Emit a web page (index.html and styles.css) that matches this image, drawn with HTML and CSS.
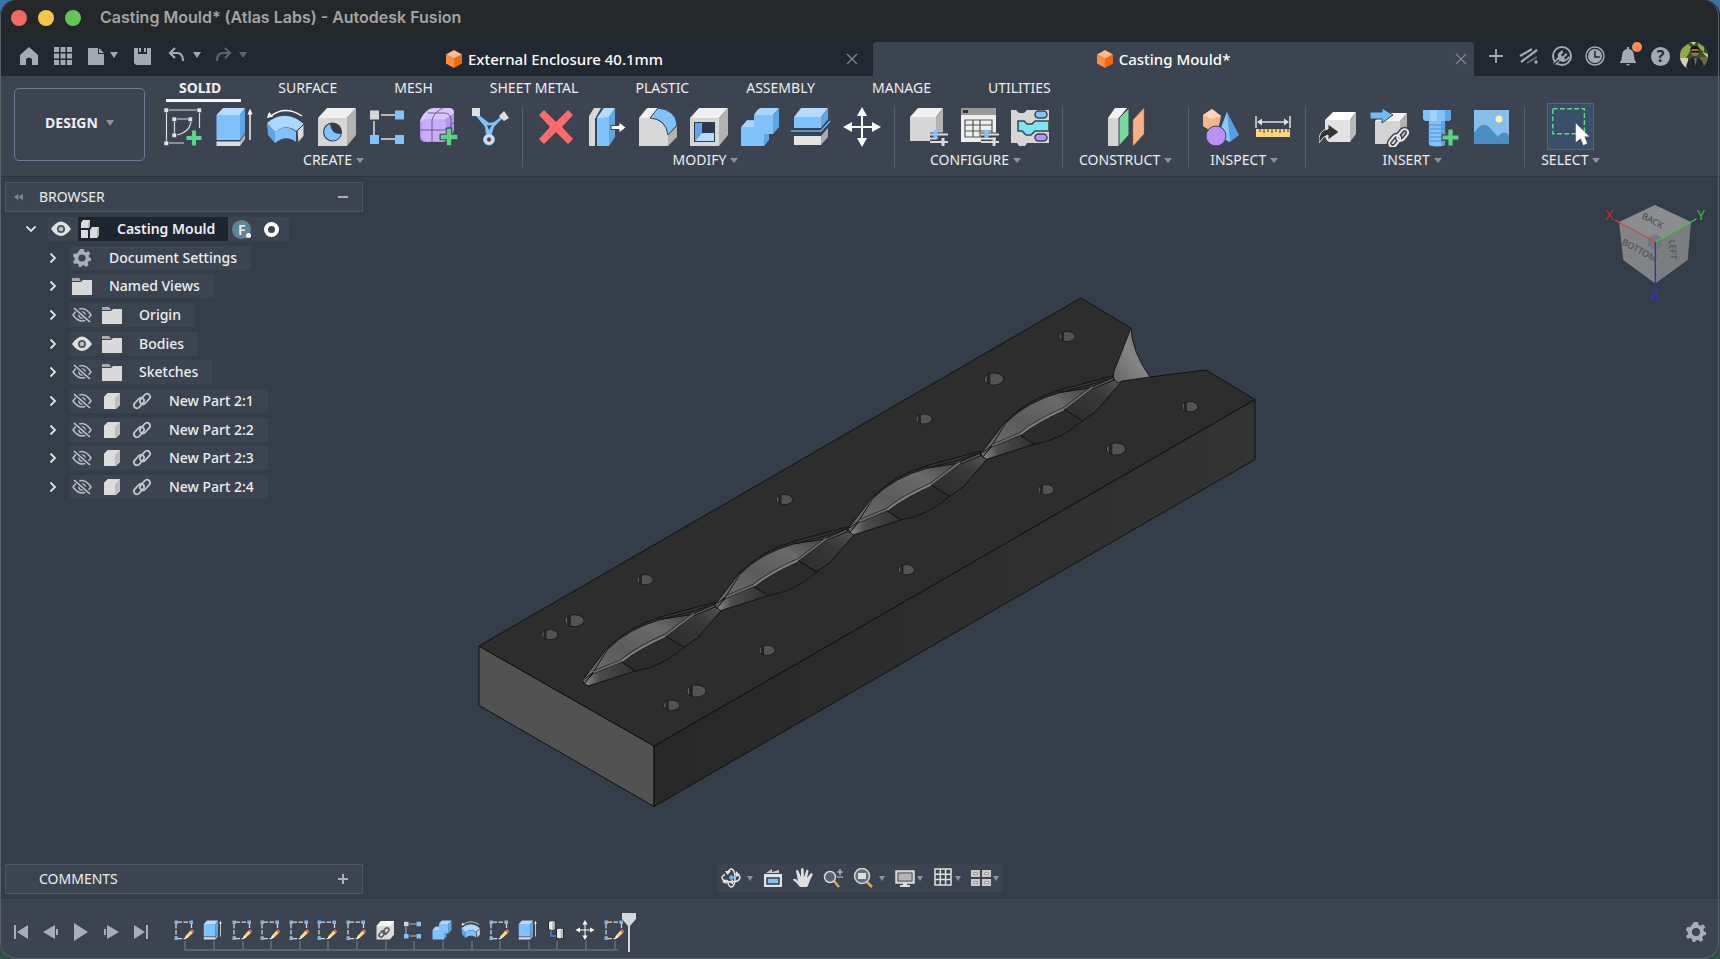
FILE: index.html
```html
<!DOCTYPE html>
<html lang="en">
<head>
<meta charset="utf-8">
<title>Casting Mould* (Atlas Labs) - Autodesk Fusion</title>
<link rel="stylesheet" href="styles.css">
</head>
<body>
<svg class="defs" aria-hidden="true">
  <defs>
    <linearGradient id="pocket" x1="0" y1="1" x2="1" y2="0"><stop offset="0" stop-color="#6c6c6c"/><stop offset=".35" stop-color="#5c5c5c"/><stop offset=".7" stop-color="#6a6a6a"/><stop offset="1" stop-color="#444"/></linearGradient>
    <linearGradient id="entry" x1="0" y1="0" x2="1" y2="0"><stop offset="0" stop-color="#8a8a8a"/><stop offset=".3" stop-color="#4c4c4c"/><stop offset="1" stop-color="#303030"/></linearGradient>
    <linearGradient id="exit" x1="0" y1="1" x2="1" y2="0"><stop offset="0" stop-color="#2b2b2b"/><stop offset=".6" stop-color="#383838"/><stop offset="1" stop-color="#555"/></linearGradient>
    <linearGradient id="notch" x1="0" y1="1" x2="1" y2="0"><stop offset="0" stop-color="#666"/><stop offset=".5" stop-color="#858585"/><stop offset="1" stop-color="#747474"/></linearGradient>
    <linearGradient id="side" x1="0" y1="0" x2="1" y2="0"><stop offset="0" stop-color="#282828"/><stop offset="1" stop-color="#333"/></linearGradient>
  </defs>
  <symbol id="i-plus-badge" viewBox="0 0 18 18"><path d="M6.500 1h5v5.500h5.500v5h-5.500v5.500h-5v-5.500H1v-5h5.500z" fill="#5bd486" stroke="#3c4452"/></symbol>
  <symbol id="i-sketch" viewBox="0 0 40 40">
    <path d="M4 3h30M2.500 5v29M35.500 5v16M4 36h16M11 12h14M10.500 13v14M27 13c0 8-6 13-14 15" fill="none" stroke="#d9dbdf" stroke-width="1.200"/>
    <path d="M0 1h4.500v4.500H0zM33 1h4.500v4.500H33zM0 34h4.500v4.500H0zM8 10h4.500v4.500H8zM24 10h4.500v4.500H24zM8 26h4.500v4.500H8z" fill="#e2e2e2" stroke="#3c4452" stroke-width=".6"/>
    <use href="#i-plus-badge" x="21" y="22" width="18" height="18"/>
  </symbol>
  <symbol id="i-extrude" viewBox="0 0 40 40">
    <path d="M1.500 8 8 1h22l-5 7z" fill="#b5dcff"/><path d="M1.500 8H25v25H1.500z" fill="#80c2fb"/><path d="m25 8 5-7v25l-5 7z" fill="#5fa6e2"/>
    <path d="M1.500 34.500H25V39H1.500z" fill="#dcdcdc"/><path d="m25 34.500 5-7V32l-5 7z" fill="#b8b8b8"/>
    <path d="M35 6v27" stroke="#fff" stroke-width="1.400"/><path d="m32.500 7.500 2.500-6 2.500 6z" fill="#fff"/>
  </symbol>
  <symbol id="i-revolve" viewBox="0 0 40 40">
    <path d="M1 16q18-15 37 1l-8 7q-10-8-21 1z" fill="#aad8ff"/><path d="m1 16 8 9v11l-7-8z" fill="#5fa6e2"/><path d="M9 25q11-9 21 0v10q-10-8-21 1z" fill="#80c2fb"/><path d="m31 24 7-7v12l-6 7z" fill="#dadada" stroke="#343c49"/>
    <path d="M5 9Q19-2 36 9" fill="none" stroke="#fff" stroke-width="1.300"/><path d="m1 11 2-6 4 4.500z" fill="#fff"/>
  </symbol>
  <symbol id="i-hole" viewBox="0 0 40 40">
    <path d="M1 11 10 1h29L30 11z" fill="#f0f0f0"/><path d="M1 11h29v28H1z" fill="#d6d6d6"/><path d="m30 11 9-10v27l-9 11z" fill="#b2b2b2"/>
    <circle cx="15.500" cy="25" r="9.500" fill="#343c49"/><path d="M13 17a8.500 8.500 0 1 0 11 10Q14 27 13 17z" fill="#80c2fb"/>
  </symbol>
  <symbol id="i-pattern" viewBox="0 0 40 40">
    <path d="M13 8h14M6 14v14M13 32h14" stroke="#dedede" stroke-width="1.500"/><path d="M2 3.500h9v9H2z" fill="#d6d6d6"/><path d="M27 3.500h9v9h-9zM2 28h9v9H2zM27 28h9v9h-9z" fill="#80c2fb"/>
  </symbol>
  <symbol id="i-form" viewBox="0 0 40 40">
    <path d="M1 15Q2 9 8 4q3-3 8-3h14q5 0 5 5v16q0 5-4 8-3 5-8 5H7q-6 0-6-6z" fill="#b696ee"/><path d="M1 15Q2 9 8 4q3-3 8-3h14q5 0 5 5L25 13H9Q3 13 1 15z" fill="#dcc6ff"/><path d="M3 15q0-3 4-3h15q5 0 5 5v12q0 5-5 5H8q-5 0-5-5z" fill="#c9adfb"/>
    <path d="M0 23h25q7-2 10-8M13 35V13q2-8 11-12M9 6h16q6 0 7 6v16" stroke="#6d5a9c" fill="none"/><use href="#i-plus-badge" x="20" y="20" width="20" height="20"/>
  </symbol>
  <symbol id="i-derive" viewBox="0 0 40 40">
    <path d="m6 7 12 10q7 1 14-7M6 7l10 12 2 12M32 10l-9 9-4 12M15 17h9l-5 9z" fill="none" stroke="#80c2fb" stroke-width="2.600"/>
    <path d="M2 1h8v8H2zM29 9l5-5 5 7-5 3z" fill="#e0e0e0"/><circle cx="19" cy="32.500" r="5.500" fill="#e0e0e0" stroke="#80c2fb"/><circle cx="19" cy="32.500" r="2" fill="#3c4452" stroke="#777"/>
  </symbol>
  <symbol id="i-delete" viewBox="0 0 40 40"><path d="m8 3 12 12L32 3l5 5-11 12 11 12-5 5-12-12L8 37l-5-5 11-12L3 8z" fill="#ff6a6a"/></symbol>
  <symbol id="i-press" viewBox="0 0 40 40">
    <path d="M2 9 7 1h7l-5 9v29H2z" fill="#d8d8d8"/><path d="m10 11 7-10h11l-6 9v29H10z" fill="#80c2fb"/><path d="m10 11 7-10h11l-6 9z" fill="#b5dcff"/><path d="m22 10 6-9v29l-6 9z" fill="#5fa6e2"/><path d="M9 11v28" stroke="#38404d" stroke-width="2"/>
    <path d="M24 18.500h8v-3.500l7 5.500-7 5.500v-3.500h-8z" fill="#fff" stroke="#3c4452"/>
  </symbol>
  <symbol id="i-fillet" viewBox="0 0 40 40">
    <path d="M1 11 9 1h11l-8 10z" fill="#f0f0f0"/><path d="M1 11h11q17 2 18 18v10H1z" fill="#d8d8d8"/><path d="m30 28 9-9v11l-9 9z" fill="#b2b2b2"/><path d="m12 11 8-10q18 2 19 17l-9 10Q28 12 12 11z" fill="#80c2fb" stroke="#3c4452"/>
  </symbol>
  <symbol id="i-shell" viewBox="0 0 40 40">
    <path d="M1 11 10 1h29L30 11z" fill="#f0f0f0"/><path d="M1 11h29v28H1z" fill="#d6d6d6"/><path d="m30 11 9-10v27l-9 11z" fill="#b2b2b2"/><path d="M5 15h21v20H5z" fill="#2c394c"/><path d="m6 16 7 0v10l-7 8z" fill="#5fa6e2"/><path d="m13 26 12 0V34H6z" fill="#b5dcff"/>
  </symbol>
  <symbol id="i-combine" viewBox="0 0 40 40">
    <path d="M14 8q4-7 7-7h18l-6 7z" fill="#a9d6ff"/><path d="m1 21 6-8h7V8h19v19h-9v12H1z" fill="#80c2fb"/><path d="m1 20 6-6h7v6z" fill="#a9d6ff"/><path d="m33 8 6-7v19l-6 7zM24 27h5v6l-5 6z" fill="#5fa6e2"/>
  </symbol>
  <symbol id="i-split" viewBox="0 0 40 40">
    <path d="m3 10 7-9h27l-7 9z" fill="#b5dcff"/><path d="M3 10h27v11H3z" fill="#80c2fb"/><path d="m30 10 7-9v11l-7 9z" fill="#5fa6e2"/><path d="M3 29h27v9H3z" fill="#e4e4e4"/><path d="m30 29 7-8v9l-7 8z" fill="#aaa"/><path d="M0 24h30l9-10" stroke="#2a4254" stroke-width="4" fill="none"/><path d="M0 24h30l9-10" stroke="#6db5ee" stroke-width="1.500" fill="none"/>
  </symbol>
  <symbol id="i-move" viewBox="0 0 40 40"><path d="m20 0 5 9h-4v10h9v-4l9 5-9 5v-4h-9v10h4l-5 9-5-9h4V21h-9v4l-9-5 9-5v4h9V9h-4z" fill="#fff"/></symbol>
  <symbol id="i-sliders" viewBox="0 0 18 18"><path d="M0 6h18M0 13h18" stroke="#3c4452" stroke-width="5"/><path d="M0 5.500h18M0 13h18" stroke="#dcdcdc" stroke-width="2"/><path d="M5.500 1v8" stroke="#80c2fb" stroke-width="4"/><path d="M13 9v8" stroke="#dcdcdc" stroke-width="3"/></symbol>
  <symbol id="i-confpart" viewBox="0 0 40 40"><path d="m2 10 8-9h25l-7 9z" fill="#f0f0f0"/><path d="M2 10h26v24H2z" fill="#d6d6d6"/><path d="m28 10 7-9v24l-7 9z" fill="#b2b2b2"/><use href="#i-sliders" x="22" y="22" width="18" height="18"/></symbol>
  <symbol id="i-conftable" viewBox="0 0 40 40"><path d="M2 1h35v7H2z" fill="#999"/><path d="M4 3h5v3H4z" fill="#333"/><path d="M2 8h35v27H2z" fill="#eee"/><path d="M6 13h27v17H6zM6 18h27M6 24h27M14 13v17M21 13v17" fill="none" stroke="#555" stroke-width="1.200"/><use href="#i-sliders" x="22" y="22" width="18" height="18"/></symbol>
  <symbol id="i-rules" viewBox="0 0 40 40"><path d="M1 3h5l3 3h5l3-3h22v33H17l-2 3H9l-2-3H1z" fill="#d6d6d6"/><path d="M8 14h6l3 3h5l3-3h14v10H25l-4 4h-5l-4-4H8z" fill="#7be6f2" stroke="#3c4452" stroke-width="1.500"/><rect x="25" y="4" width="12" height="7" rx="3.500" fill="#80c2fb" stroke="#3c4452" stroke-width="1.500"/><rect x="25" y="27" width="12" height="7" rx="3.500" fill="#b794f4" stroke="#3c4452" stroke-width="1.500"/></symbol>
  <symbol id="i-construct" viewBox="0 0 40 40"><path d="M2 11 9 1h12l-8 10v28H2z" fill="#f2f2f2"/><path d="M2 11h11v28H2z" fill="#d4d4d4"/><path d="m13 11 10-10v27L13 39z" fill="#77d99c" stroke="#38404d"/><path d="M27 13 38 1v26L27 39z" fill="#f7b184" stroke="#b5694b" stroke-width=".5"/></symbol>
  <symbol id="i-measureshapes" viewBox="0 0 40 40"><path d="m1 8 9-6 9 7-2 10-10 4-6-4z" fill="#f6b48c"/><path d="m1 8 9-6 9 7-10 3z" fill="#ffd3b8"/><path d="m25 5 12 23-9 7-12-6z" fill="#559fdc"/><path d="m25 5-9 24 12 6z" fill="#8bc8fa"/><circle cx="14" cy="29" r="10" fill="#bb90f5" stroke="#3c4452"/></symbol>
  <symbol id="i-measure" viewBox="0 0 40 40"><path d="M3 9v12M37 9v12M5 15h30" stroke="#e0e0e0" stroke-width="1.500"/><path d="m4 15 5-3.500v7zM36 15l-5-3.500v7z" fill="#e0e0e0"/><path d="M3 22h34v8H3z" fill="#ffd57d"/><path d="M7 22v3M11 22v4M15 22v3M19 22v4M23 22v3M27 22v4M31 22v3M35 22v3" stroke="#59513c" stroke-width="1.200"/></symbol>
  <symbol id="i-insderive" viewBox="0 0 40 40"><path d="m6 13 8-8h23l-6 8z" fill="#fff"/><path d="M6 13h25v22H10q-4-2-4-8z" fill="#e2e2e2"/><path d="m31 13 6-8v22l-6 8z" fill="#b8b8b8"/><path d="M0 36q-1-13 9-14v-5l11 8-11 8v-5q-5 1-9 8z" fill="#343434" stroke="#dedede"/></symbol>
  <symbol id="i-inscomp" viewBox="0 0 40 40"><path d="m5 14 8-8h24l-7 8z" fill="#f4f4f4"/><path d="M5 14h25v23H5z" fill="#d4d4d4"/><path d="m30 14 7-8v22l-7 9z" fill="#b3b3b3"/><path d="M0 5h12V1l11 7-11 8v-4H0z" fill="#70baf8" stroke="#3c4452"/><g fill="none" stroke="#3c4452" stroke-width="5"><rect x="18" y="31" width="13" height="7" rx="3.500" transform="rotate(-50 24 34)"/><rect x="26" y="25" width="13" height="7" rx="3.500" transform="rotate(-50 32 28)"/></g><g fill="none" stroke="#ececec" stroke-width="2"><rect x="18" y="31" width="13" height="7" rx="3.500" transform="rotate(-50 24 34)"/><rect x="26" y="25" width="13" height="7" rx="3.500" transform="rotate(-50 32 28)"/></g></symbol>
  <symbol id="i-bolt" viewBox="0 0 40 40"><path d="M2 3h28v9l-2 2H4l-2-2z" fill="#80c2fb"/><path d="M9 3h7v11H9z" fill="#9ed3ff"/><path d="M24 3h6v9l-2 2h-4z" fill="#5fa6e2"/><path d="M8 14h16v24q-8 3-16 0z" fill="#80c2fb"/><path d="M20 14h4v24h-4z" fill="#5fa6e2"/><path d="M7 18h18M7 22h18M7 26h18M7 30h18M7 34h18" stroke="#4e93cf" stroke-width="1"/><use href="#i-plus-badge" x="20" y="21" width="19" height="19"/></symbol>
  <symbol id="i-image" viewBox="0 0 40 40"><path d="M2 3h35v34H2z" fill="#87bde8"/><path d="M2 26q9-14 17-4l7 8q5-8 11-2v9H2z" fill="#4b8fc2"/><circle cx="27" cy="12" r="3.500" fill="#fff1b0"/></symbol>
  <symbol id="i-select" viewBox="0 0 47 47"><path d="M5 5h33v26H5z" fill="none" stroke="#5fd98c" stroke-width="1.500" stroke-dasharray="5 2.500"/><path d="M29 20v20l5-4 3 7 4-2-3-7h5z" fill="#fff"/></symbol>
  <symbol id="i-sketchedit" viewBox="0 0 40 40"><path d="M7 4h25M4 8v26M35 8v8M7 37h15" stroke="#d8d8d8" stroke-width="2.500" stroke-dasharray="9 3"/><path d="M1 1h7v7H1zM31 1h7v7h-7zM1 33h7v7H1z" fill="#72b9f4"/><path d="m24 31 9-10 5 5-10 9-6 3z" fill="#ffd483"/><path d="m33 21 3-3 5 5-3 3z" fill="#f0605c"/><path d="m24 31 4 4-7 4z" fill="#fff"/></symbol>
  <symbol id="i-cylinders" viewBox="0 0 40 40"><path d="M10 22v10h10" fill="none" stroke="#4c86d0" stroke-width="3"/><path d="M5 3q7-4 13 0v16q-7 4-13 0zM21 18q7-4 14 0v18q-7 4-14 0z" fill="#eaeaea" stroke="#222933" stroke-width="2"/><path d="M12 3h5v16h-5zM29 19h5v17h-5z" fill="#bdbdbd"/></symbol>
  <symbol id="i-partlink" viewBox="0 0 40 40"><path d="m3 12 9-10h26v27l-8 10H3z" fill="#dadada"/><path d="m3 12 9-10h26l-7 10z" fill="#f7f7f7"/><g fill="none" stroke="#555" stroke-width="3"><rect x="7" y="24" width="14" height="8" rx="4" transform="rotate(-50 14 28)"/><rect x="15" y="18" width="14" height="8" rx="4" transform="rotate(-50 22 22)"/></g></symbol>
  <symbol id="i-home" viewBox="0 0 18 18"><path d="m9 0 9 8v10h-6v-6q-3-3-6 0v6H0V8z"/></symbol>
  <symbol id="i-apps" viewBox="0 0 18 18"><path d="M0 0h5v5H0zM6.500 0h5v5h-5zM13 0h5v5h-5zM0 6.500h5v5H0zM6.500 6.500h5v5h-5zM13 6.500h5v5h-5zM0 13h5v5H0zM6.500 13h5v5h-5zM13 13h5v5h-5z"/></symbol>
  <symbol id="i-file" viewBox="0 0 18 18"><path d="M0 1h10v6h6v11H0zM11 1l5 5h-5z"/></symbol>
  <symbol id="i-save" viewBox="0 0 18 18"><path d="M0 1h4v6h9V1h4v17H4v-6h9v5h-2v-3H9v4H2l-2-2zM5 1h2v4H5zM10 1h2v4h-2z"/></symbol>
  <symbol id="i-undo" viewBox="0 0 18 18"><path d="M7 1 2 6l5 5M2 6h7q6 0 6 8" fill="none" stroke="currentColor" stroke-width="2.200"/></symbol>
  <symbol id="i-cube3" viewBox="0 0 18 20"><path d="m9 0 9 5-9 5-9-5z" fill="#ffb98a"/><path d="m0 5 9 5v10l-9-5z" fill="#ff8c3f"/><path d="m18 5-9 5v10l9-5z" fill="#f46a0a"/></symbol>
  <symbol id="i-eye" viewBox="0 0 20 16"><path d="M0 8q10-15 20 0-10 14-20 0z" fill="#e0e0e0"/><circle cx="10" cy="8" r="4" fill="#4a5260"/><circle cx="10" cy="8" r="2.300" fill="#bbb"/></symbol>
  <symbol id="i-eyeoff" viewBox="0 0 20 16"><path d="M1 8q9-13 18 0-9 12-18 0z" fill="none" stroke="#b9bcc3" stroke-width="1.500"/><circle cx="10" cy="8" r="3" fill="none" stroke="#b9bcc3" stroke-width="1.500"/><path d="m3 1 15 14" stroke="#3c4452" stroke-width="4"/><path d="m2 1 16 14" stroke="#c9ccd1" stroke-width="1.500"/></symbol>
  <symbol id="i-folder" viewBox="0 0 20 18"><path d="M0 1h7l2 3H0z" fill="#aaa"/><path d="M0 5h9l2-2h9v15H0z" fill="#d9d9d9"/></symbol>
  <symbol id="i-part" viewBox="0 0 18 18"><path d="m1 5 4-4h12l-4 4z" fill="#f0f0f0"/><path d="m1 5 4-4h12v12l-4 4H1z" fill="#dcdcdc"/><path d="m12 6 5-5v11l-5 5z" fill="#bdbdbd"/></symbol>
  <symbol id="i-assembly" viewBox="0 0 20 18"><path d="m1 3 2-3h7v6L9 8H1zM1 10h7v8H1zM10 10l2-3h7v8l-2 3h-7z" fill="#dcdcdc"/><path d="m8 3 2-3v6L8 8zM17 10l2-3v8l-2 3z" fill="#b2b2b2"/></symbol>
  <symbol id="i-link" viewBox="0 0 20 18"><g fill="none" stroke="#c6c8cc" stroke-width="1.800"><rect x="1" y="8" width="12" height="6" rx="3" transform="rotate(-48 7 11)"/><rect x="7" y="4" width="12" height="6" rx="3" transform="rotate(-48 13 7)"/></g></symbol>
  <symbol id="i-gear" viewBox="0 0 20 20"><path fill-rule="evenodd" d="M8 0h4l.6 3 2 .8L17 2.200 19.300 5l-2 2.500.6 2 2.100.5v3l-2.700.5-1 2 1 2.500-3 2-2-2-2 .3L9 20H6.500L6 17l-2-1-2.500.8L0 14l2-2-.5-2.500L0 8l1-3 3 .3L5.500 3.500zM10 6a4 4 0 1 0 0 8 4 4 0 0 0 0-8z" fill="#a9adb7"/></symbol>
  <symbol id="i-chevron" viewBox="0 0 8 12"><path d="m1.500 1.500 4.500 4.500-4.500 4.500" fill="none" stroke="#e2e2dc" stroke-width="1.800"/></symbol>
</svg>

<div class="window">
  <header class="titlebar">
    <button class="light light-close" aria-label="Close"></button>
    <button class="light light-min" aria-label="Minimize"></button>
    <button class="light light-max" aria-label="Zoom"></button>
    <h1 class="title">Casting Mould* (Atlas Labs) - Autodesk Fusion</h1>
  </header>

  <div class="docbar">
    <div class="quick">
      <button aria-label="Home"><svg class="s18"><use href="#i-home"/></svg></button>
      <button aria-label="Data panel"><svg class="s18"><use href="#i-apps"/></svg></button>
      <button class="pair" aria-label="File"><svg class="s18"><use href="#i-file"/></svg><i class="caret"></i></button>
      <button aria-label="Save"><svg class="s18"><use href="#i-save"/></svg></button>
      <button class="pair wide" aria-label="Undo"><svg class="s18"><use href="#i-undo"/></svg><i class="caret"></i></button>
      <button class="pair wide dim" aria-label="Redo"><svg class="s18 flip"><use href="#i-undo"/></svg><i class="caret"></i></button>
    </div>
    <div class="doctabs">
      <div class="doctab">
        <button class="docname"><svg class="doccube"><use href="#i-cube3"/></svg>External Enclosure 40.1mm</button>
        <button class="docclose" aria-label="Close External Enclosure"><svg viewBox="0 0 14 14"><path d="m2 2 10 10M12 2 2 12"/></svg></button>
      </div>
      <div class="doctab active">
        <button class="docname"><svg class="doccube"><use href="#i-cube3"/></svg>Casting Mould*</button>
        <button class="docclose" aria-label="Close Casting Mould"><svg viewBox="0 0 14 14"><path d="m2 2 10 10M12 2 2 12"/></svg></button>
      </div>
    </div>
    <div class="account">
      <button aria-label="New tab"><svg viewBox="0 0 20 20"><path d="M10 3v14M3 10h14" stroke="currentColor" stroke-width="1.800"/></svg></button>
      <button aria-label="Activity"><svg viewBox="0 0 20 20"><path d="M1 10 13 3M2 16 18 4" stroke="currentColor" stroke-width="2.200"/><path d="m8 17 10-6" stroke="#686d78" stroke-width="2"/><circle cx="17" cy="16" r="1.700" fill="currentColor"/></svg></button>
      <button aria-label="Extensions"><svg viewBox="0 0 20 20"><circle cx="10" cy="10" r="9" fill="none" stroke="currentColor" stroke-width="2"/><path d="m1 17 5-6q-1-4 2-5l2-2 1.500 2L9 9l1.500 1.500L14 7l1.500 1.500L12 12l1.500 1.500L17 10l1 2-4 3q-3 2-6 0l-4 4z" fill="currentColor"/><path d="m2 18 5-4" stroke="#222831" stroke-width="1.500"/></svg></button>
      <button aria-label="Job status"><svg viewBox="0 0 20 20"><circle cx="10" cy="10" r="9" fill="none" stroke="currentColor" stroke-width="1.500"/><circle cx="10" cy="10" r="7" fill="currentColor"/><path d="M10 5v6h5" fill="none" stroke="#222831" stroke-width="1.600"/></svg></button>
      <button class="bell" aria-label="Notifications"><svg viewBox="0 0 20 20"><path d="M9 1h2v2q5 1 5 7 0 4 2 6v1H2v-1q2-2 2-6 0-6 5-7zM8 18h4q-2 3-4 0z" fill="currentColor"/></svg><i class="dot"></i></button>
      <button class="help" aria-label="Help">?</button>
      <button class="avatar" aria-label="Profile"><svg viewBox="0 0 28 28"><path d="M0 0h28v28H0z" fill="#3c5224"/><path d="M0 8 8 2l4 4-6 10H0zM18 1l6 4v5l-6-4z" fill="#93a94c"/><path d="M10 0h6l-2 3zM22 10l6 2v4z" fill="#c9d39a"/><path d="M0 16h8v12H0z" fill="#d3cfbc"/><path d="M20 15h8v13h-8z" fill="#6a6d46"/><path d="M6 28q0-12 9-13 9 1 9 13z" fill="#23262b"/><circle cx="15" cy="10" r="4" fill="#9a6f52"/><path d="M10 9q0-5 5-5t5 5l-2-2h-6zM11 9h8v1.500h-8z" fill="#15110f"/><path d="m14 16 1.500 8 1.500-8z" fill="#60748a"/></svg></button>
    </div>
  </div>

  <div class="ribbon">
    <div class="workspace"><button class="design">DESIGN <i class="caret"></i></button></div>
    <div class="ribbonbody">
      <nav class="ribtabs">
        <button class="ribtab on">SOLID</button><button class="ribtab">SURFACE</button><button class="ribtab">MESH</button><button class="ribtab">SHEET METAL</button><button class="ribtab">PLASTIC</button><button class="ribtab">ASSEMBLY</button><button class="ribtab">MANAGE</button><button class="ribtab">UTILITIES</button>
      </nav>
      <div class="groups">
        <section class="group first">
          <div class="tools">
            <button class="tool" aria-label="Create Sketch"><svg><use href="#i-sketch"/></svg></button>
            <button class="tool" aria-label="Extrude"><svg><use href="#i-extrude"/></svg></button>
            <button class="tool" aria-label="Revolve"><svg><use href="#i-revolve"/></svg></button>
            <button class="tool" aria-label="Hole"><svg><use href="#i-hole"/></svg></button>
            <button class="tool" aria-label="Rectangular Pattern"><svg><use href="#i-pattern"/></svg></button>
            <button class="tool" aria-label="Create Form"><svg><use href="#i-form"/></svg></button>
            <button class="tool" aria-label="Automated Modeling"><svg><use href="#i-derive"/></svg></button>
          </div>
          <button class="grouplabel">CREATE<i class="caret"></i></button>
        </section>
        <section class="group">
          <div class="tools">
            <button class="tool" aria-label="Delete"><svg><use href="#i-delete"/></svg></button>
            <button class="tool" aria-label="Press Pull"><svg><use href="#i-press"/></svg></button>
            <button class="tool" aria-label="Fillet"><svg><use href="#i-fillet"/></svg></button>
            <button class="tool" aria-label="Shell"><svg><use href="#i-shell"/></svg></button>
            <button class="tool" aria-label="Combine"><svg><use href="#i-combine"/></svg></button>
            <button class="tool" aria-label="Split Body"><svg><use href="#i-split"/></svg></button>
            <button class="tool" aria-label="Move"><svg><use href="#i-move"/></svg></button>
          </div>
          <button class="grouplabel">MODIFY<i class="caret"></i></button>
        </section>
        <section class="group">
          <div class="tools">
            <button class="tool" aria-label="Configure"><svg><use href="#i-confpart"/></svg></button>
            <button class="tool" aria-label="Configuration Table"><svg><use href="#i-conftable"/></svg></button>
            <button class="tool" aria-label="Rules"><svg><use href="#i-rules"/></svg></button>
          </div>
          <button class="grouplabel">CONFIGURE<i class="caret"></i></button>
        </section>
        <section class="group roomy">
          <div class="tools"><button class="tool" aria-label="Offset Plane"><svg><use href="#i-construct"/></svg></button></div>
          <button class="grouplabel">CONSTRUCT<i class="caret"></i></button>
        </section>
        <section class="group">
          <div class="tools">
            <button class="tool" aria-label="Physical Material"><svg><use href="#i-measureshapes"/></svg></button>
            <button class="tool" aria-label="Measure"><svg><use href="#i-measure"/></svg></button>
          </div>
          <button class="grouplabel">INSPECT<i class="caret"></i></button>
        </section>
        <section class="group">
          <div class="tools">
            <button class="tool" aria-label="Insert Derive"><svg><use href="#i-insderive"/></svg></button>
            <button class="tool" aria-label="Insert Component"><svg><use href="#i-inscomp"/></svg></button>
            <button class="tool" aria-label="Insert Fastener"><svg><use href="#i-bolt"/></svg></button>
            <button class="tool" aria-label="Insert Canvas"><svg><use href="#i-image"/></svg></button>
          </div>
          <button class="grouplabel">INSERT<i class="caret"></i></button>
        </section>
        <section class="group roomy">
          <div class="tools"><button class="tool selected" aria-label="Select"><svg><use href="#i-select"/></svg></button></div>
          <button class="grouplabel">SELECT<i class="caret"></i></button>
        </section>
      </div>
    </div>
  </div>

  <main class="viewport">
    <svg class="model" viewBox="0 177 1720 722" role="img" aria-label="Casting mould body">
      <defs>
        <g id="hole"><ellipse rx="8" ry="5" fill="#262626" stroke="#191919" stroke-width=".8"/><path d="M-3-4.300Q-1-4.600 0-4.600A7.600 4.600 0 0 1 0 4.600q-2 0-3-.3z" fill="#535353"/><path d="M-6-3.200Q-9 0-6 3.200-7 0-6-3.200z" fill="#777"/></g>
        <g id="cavity" stroke="#161616" stroke-width="3" stroke-linejoin="round">
          <path d="M0-5 73-100Q140-168 237-195L397-238 422-220 387-180 347-133 305-103Q240-45 159-32L17 13z" fill="#2c2c2c"/>
          <path d="M249-137 337-203 397-225 422-220 387-180 347-133 305-103z" fill="url(#exit)"/>
          <path d="M32-25 117-60 159-32 17 13 5 5z" fill="url(#entry)"/>
          <path d="M0-5 73-100 78-95 32-28 5 7z" fill="#656565"/>
          <path d="M32-28 75-97Q137-160 239-188L332-203 249-137Q167-100 117-62z" fill="url(#pocket)"/>
          <path d="m237-195 160-43v13l-60 22-98 15z" fill="#353535"/>
          <path d="M330-203 397-233V-224L340-200z" fill="#555"/>
          <path d="M33-28 117-63Q167-103 249-139L335-204" fill="none" stroke="#222" stroke-width="10"/>
          <path d="M33-28 117-63Q167-103 249-139L335-204" fill="none" stroke="#6a6a6a" stroke-width="6"/>
          <path d="M117-61Q167-101 249-137" fill="none" stroke="#868686" stroke-width="4"/>
          <path d="M117-60 159-32M249-137 305-103M6-8 32-28M239-188l90-23 68-22" fill="none"/>
        </g>
      </defs>
      <path d="M479 646 654 746v60.500L479 705.500z" fill="#525252" stroke="#111"/>
      <path d="M654 746 1255 399.500v60L654 806.500z" fill="url(#side)" stroke="#111"/>
      <path d="M479 646 1081 298 1131 328 1113 376 1116 382 1150 377 1206 370 1255 399.500 654 746z" fill="#2d2d2d" stroke="#111"/>
      <use href="#cavity" transform="translate(582.500 681.700) scale(.3333)"/>
      <use href="#cavity" transform="translate(715 606.300) scale(.3333)"/>
      <use href="#cavity" transform="translate(848 530.600) scale(.3333)"/>
      <use href="#cavity" transform="translate(981 455) scale(.3333)"/>
      <path d="M1131 328Q1132 352 1150 377L1122 381Q1117 385 1114 379 1112 375 1116 366z" fill="url(#notch)" stroke="#1b1b1b"/>
      <use href="#hole" x="1067" y="336.500"/><use href="#hole" x="924" y="419"/><use href="#hole" x="784.500" y="499.500"/><use href="#hole" x="645" y="579.700"/><use href="#hole" x="549.700" y="634.700"/>
      <use href="#hole" x="1190" y="406.700"/><use href="#hole" x="1046" y="489.700"/><use href="#hole" x="906.500" y="569.700"/><use href="#hole" x="767" y="650.300"/><use href="#hole" x="671.700" y="705.300"/>
      <use href="#hole" transform="translate(994 379) scale(1.200)"/><use href="#hole" transform="translate(1116 449) scale(1.200)"/><use href="#hole" transform="translate(574.500 620.700) scale(1.200)"/><use href="#hole" transform="translate(696.500 691) scale(1.200)"/>
    </svg>

    <svg class="viewcube" viewBox="0 0 110 110" role="img" aria-label="View cube">
      <path d="M57 8 93 25 57.300 45 21 25z" fill="#8b8d90"/><path d="m21 25 36.300 20v41.500L25.300 63z" fill="#828487"/><path d="M93 25 57.300 45v41.500L89.700 63z" fill="#7b7d81"/>
      <path d="m50 41 7-4 7 4v8l-7 4-7-4z" fill="#6b6e76" opacity=".6"/>
      <path d="m17 23 40.300 22" stroke="#d2474b" stroke-width="1.300"/><path d="m57.300 45 41-23" stroke="#43c84a" stroke-width="1.300"/><path d="M57.300 45v45" stroke="#2d2fc0" stroke-width="1.300"/>
      <text x="7" y="23" fill="#b32a35">X</text><text x="99" y="23" fill="#37a83d">Y</text><text x="53" y="102" fill="#3234c8">Z</text>
      <g class="faces"><text transform="translate(43 21) rotate(28)">BACK</text><text transform="translate(23 47) rotate(28)">BOTTOM</text><text transform="translate(71 43) rotate(86)">LEFT</text></g>
    </svg>

    <aside class="browser">
      <header class="panelhead">
        <button class="collapse" aria-label="Collapse browser"><svg viewBox="0 0 10 8"><path d="m5 0v8L0 4zM10 0v8L5 4z"/></svg></button>
        <h2>BROWSER</h2>
        <button class="panelbtn" aria-label="Minimize browser"><svg viewBox="0 0 10 10"><path d="M0 5h10"/></svg></button>
      </header>
      <ul class="tree">
        <li class="root"><button class="twist open" aria-label="Collapse"><svg><use href="#i-chevron"/></svg></button>
          <span class="chip"><svg class="ico eye"><use href="#i-eye"/></svg><span class="rootname"><svg class="ico"><use href="#i-assembly"/></svg><b>Casting Mould</b></span><span class="badge">F</span><span class="ring"></span></span></li>
        <li><button class="twist" aria-label="Expand"><svg><use href="#i-chevron"/></svg></button><span class="chip"><svg class="ico"><use href="#i-gear"/></svg><span class="name">Document Settings</span></span></li>
        <li><button class="twist" aria-label="Expand"><svg><use href="#i-chevron"/></svg></button><span class="chip"><svg class="ico"><use href="#i-folder"/></svg><span class="name">Named Views</span></span></li>
        <li><button class="twist" aria-label="Expand"><svg><use href="#i-chevron"/></svg></button><span class="chip"><svg class="ico"><use href="#i-eyeoff"/></svg><svg class="ico"><use href="#i-folder"/></svg><span class="name">Origin</span></span></li>
        <li><button class="twist" aria-label="Expand"><svg><use href="#i-chevron"/></svg></button><span class="chip"><svg class="ico"><use href="#i-eye"/></svg><svg class="ico"><use href="#i-folder"/></svg><span class="name">Bodies</span></span></li>
        <li><button class="twist" aria-label="Expand"><svg><use href="#i-chevron"/></svg></button><span class="chip"><svg class="ico"><use href="#i-eyeoff"/></svg><svg class="ico"><use href="#i-folder"/></svg><span class="name">Sketches</span></span></li>
        <li><button class="twist" aria-label="Expand"><svg><use href="#i-chevron"/></svg></button><span class="chip"><svg class="ico"><use href="#i-eyeoff"/></svg><svg class="ico"><use href="#i-part"/></svg><svg class="ico"><use href="#i-link"/></svg><span class="name">New Part 2:1</span></span></li>
        <li><button class="twist" aria-label="Expand"><svg><use href="#i-chevron"/></svg></button><span class="chip"><svg class="ico"><use href="#i-eyeoff"/></svg><svg class="ico"><use href="#i-part"/></svg><svg class="ico"><use href="#i-link"/></svg><span class="name">New Part 2:2</span></span></li>
        <li><button class="twist" aria-label="Expand"><svg><use href="#i-chevron"/></svg></button><span class="chip"><svg class="ico"><use href="#i-eyeoff"/></svg><svg class="ico"><use href="#i-part"/></svg><svg class="ico"><use href="#i-link"/></svg><span class="name">New Part 2:3</span></span></li>
        <li><button class="twist" aria-label="Expand"><svg><use href="#i-chevron"/></svg></button><span class="chip"><svg class="ico"><use href="#i-eyeoff"/></svg><svg class="ico"><use href="#i-part"/></svg><svg class="ico"><use href="#i-link"/></svg><span class="name">New Part 2:4</span></span></li>
      </ul>
    </aside>

    <section class="comments panelhead">
      <h2>COMMENTS</h2>
      <button class="panelbtn" aria-label="Add comment"><svg viewBox="0 0 10 10"><path d="M0 5h10M5 0v10"/></svg></button>
    </section>

    <div class="navbar">
      <button aria-label="Orbit"><svg viewBox="0 0 20 20"><g fill="none" stroke="#e3e3e3" stroke-width="1.500"><path d="M7 5Q8 1 10.500 1 14 2 14 10q0 9-4 9-3-1-3.500-7"/><path d="M14 6q5 1 5 4-1 4-9 4t-9-4q0-2 3-3.500"/></g><path d="M4 3h6L6.500 7zM15 3v6l4-2zM1 14l4.500-3v5zM8 14l4-2.500v5z" fill="#e3e3e3"/><path d="M8 9.500h5M10.500 7v5" stroke="#72b9f4" stroke-width="2"/></svg><i class="caret"></i></button>
      <button aria-label="Look at"><svg viewBox="0 0 20 20"><path d="m3 5 6-4v3l7-2v3z" fill="#ccc"/><path d="M1 6h18v13H1z" fill="#e4e4e4"/><path d="M4 10h12v6H4z" fill="#80c2fb" stroke="#333c49" stroke-width="1.500"/></svg></button>
      <button aria-label="Pan"><svg viewBox="0 0 20 20"><path d="M7 19Q3 14 0 12q1-3 5 1L3 3q1-2 2.500 0L8 9 8 1q1.500-2 2.500 0l.5 8 2.500-7q2-1 2 1L14 10l4-5q2 0 1.500 2Q17 12 16 15q-1 3-2 4z" fill="#dedede"/></svg></button>
      <button aria-label="Zoom"><svg viewBox="0 0 20 20"><path d="m11 13 5 6" stroke="#e0a560" stroke-width="2.500"/><circle cx="7" cy="9" r="5.500" fill="#59616e" stroke="#d6d6d6" stroke-width="1.500"/><path d="M14 4h6M17 1v6M14 9h6" stroke="#ccc" stroke-width="1.200"/></svg></button>
      <button aria-label="Zoom window"><svg viewBox="0 0 20 20"><path d="m14 14 5 5" stroke="#e0a560" stroke-width="2.500"/><circle cx="9" cy="8" r="7.500" fill="#656d79" stroke="#d6d6d6" stroke-width="1.500"/><path d="M5 5h8v6H5z" fill="#ddd"/></svg><i class="caret"></i></button>
      <button class="snug" aria-label="Display settings"><svg viewBox="0 0 20 20"><path d="M1 3h18v12H1z" fill="#b5b5b5" stroke="#ddd" stroke-width="1.500"/><path d="M3 5h14v8H3z" fill="none" stroke="#4c5462"/><path d="M8 15h4v2h3v2H5v-2h3z" fill="#ddd"/></svg><i class="caret"></i></button>
      <button class="snug" aria-label="Grid and snaps"><svg viewBox="0 0 20 20"><path d="M2 1h16v16H2zM2 6.300h16M2 11.600h16M7.300 1v16M12.600 1v16" fill="none" stroke="#e0e0e0" stroke-width="1.500"/></svg><i class="caret"></i></button>
      <button class="snug" aria-label="Viewports"><svg viewBox="0 0 20 20"><path d="M0 2h9v7H0zM11 2h9v7h-9zM0 11h9v7H0zM11 11h9v7h-9z" fill="#c9c9c9"/><path d="M2.500 4.500h4v2h-4zM13.500 4.500h4v2h-4zM2.500 13.500h4v2h-4zM13.500 13.500h4v2h-4z" fill="#eee" stroke="#999"/></svg><i class="caret"></i></button>
    </div>
  </main>

  <footer class="timeline">
    <div class="playback">
      <button aria-label="Go to start"><svg viewBox="0 0 16 18"><path d="M1 2h2v14H1zM15 2v14L4 9z"/></svg></button>
      <button aria-label="Step back"><svg viewBox="0 0 16 18"><path d="M12 2v14L0 9zM13 6h2v6h-2z"/></svg></button>
      <button aria-label="Play"><svg viewBox="0 0 16 18"><path d="m1 0 14 9-14 9z"/></svg></button>
      <button aria-label="Step forward"><svg viewBox="0 0 16 18"><path d="m4 2 12 7-12 7zM1 6h2v6H1z"/></svg></button>
      <button aria-label="Go to end"><svg viewBox="0 0 16 18"><path d="M13 2h2v14h-2zM1 2v14l11-7z"/></svg></button>
    </div>
    <div class="track">
      <ol class="features">
        <li><button aria-label="Sketch 1"><svg><use href="#i-sketchedit"/></svg></button></li>
        <li><button aria-label="Extrude 1"><svg><use href="#i-extrude"/></svg></button></li>
        <li><button aria-label="Sketch 2"><svg><use href="#i-sketchedit"/></svg></button></li>
        <li><button aria-label="Sketch 3"><svg><use href="#i-sketchedit"/></svg></button></li>
        <li><button aria-label="Sketch 4"><svg><use href="#i-sketchedit"/></svg></button></li>
        <li><button aria-label="Sketch 5"><svg><use href="#i-sketchedit"/></svg></button></li>
        <li><button aria-label="Sketch 6"><svg><use href="#i-sketchedit"/></svg></button></li>
        <li><button aria-label="New Part"><svg><use href="#i-partlink"/></svg></button></li>
        <li><button aria-label="Pattern"><svg><use href="#i-pattern"/></svg></button></li>
        <li><button aria-label="Combine"><svg><use href="#i-combine"/></svg></button></li>
        <li><button aria-label="Revolve"><svg><use href="#i-revolve"/></svg></button></li>
        <li><button aria-label="Sketch 7"><svg><use href="#i-sketchedit"/></svg></button></li>
        <li><button aria-label="Extrude 2"><svg><use href="#i-extrude"/></svg></button></li>
        <li><button aria-label="Copy"><svg><use href="#i-cylinders"/></svg></button></li>
        <li><button aria-label="Move"><svg><use href="#i-move"/></svg></button></li>
        <li><button aria-label="Sketch 8"><svg><use href="#i-sketchedit"/></svg></button></li>
      </ol>
      <svg class="marker" viewBox="0 0 14 40"><path d="M0 0h14v6L8 13v26H6V13L0 6z"/></svg>
    </div>
    <button class="settings" aria-label="Timeline settings"><svg class="s20"><use href="#i-gear"/></svg></button>
  </footer>
</div>
</body>
</html>
```
FILE: styles.css
```css
* { box-sizing: border-box; }
body {
  margin: 0;
  background: linear-gradient(#3c73aa, #2c5560 60%, #2f5148);
  font: 15px/20px "Noto Sans", "Open Sans", sans-serif;
  color: #eceef1;
}
button { margin: 0; padding: 0; border: 0; background: none; color: inherit; font: inherit; display: inline-flex; align-items: center; justify-content: center; }
h1, h2, ul, ol { margin: 0; padding: 0; list-style: none; }
.defs { position: absolute; width: 0; height: 0; }
.window { position: relative; height: 100vh; display: flex; flex-direction: column; border-radius: 16px; overflow: hidden; background: #343d4a; }
.window::after { content: ""; position: absolute; inset: 0 1px 0 0; border: solid #59616c; border-width: 0 1px 1px; border-radius: 16px; pointer-events: none; }
.caret { flex: none; width: 8px; border: 4px solid transparent; border-top: 6px solid #8c94a1; border-bottom: 0; }

.titlebar { flex: none; height: 38px; padding: 0 11px; display: flex; align-items: center; gap: 11px; background: #25282a; }
.light { width: 16px; height: 16px; margin-bottom: 2px; border-radius: 50%; }
.light-close { background: #ed6a63; }
.light-min { background: #f5c64c; }
.light-max { background: #62c558; }
.title { margin: 0 0 4px 8px; font: 600 16px/20px Inter, sans-serif; color: #a3a4a5; }

.docbar { flex: none; height: 38px; display: flex; background: #222831; color: #a5a9b4; }
.quick { flex: 0 0 264px; display: flex; align-items: center; gap: 16px; padding: 0 0 2px 20px; }
.pair { gap: 4px; }
.pair.wide { gap: 7px; margin-right: -3px; }
.quick .caret { border-top-color: #a5a9b4; margin-bottom: 2px; }
.dim { opacity: .45; }
.s18 { width: 18px; height: 18px; fill: currentColor; }
.s20 { width: 20px; height: 20px; }
.flip { transform: scaleX(-1); }
.doctabs { flex: 1; display: flex; padding-top: 4px; }
.doctab { flex: 1; display: flex; padding-right: 14px; }
.doctab.active { padding-right: 6px; background: #3c4452; border-radius: 4px 4px 0 0; }
.doctabs { margin-right: 0; }
.docname { flex: 1; gap: 6px; color: #fff; font-weight: 500; }
.doccube { width: 16px; height: 18px; }
.docclose svg { width: 14px; height: 14px; fill: none; stroke: #7f8590; stroke-width: 1.300; }
.account { flex: 0 0 246px; display: flex; align-items: center; padding: 0 5px 2px; }
.account button { flex: 0 0 33px; height: 33px; }
.account svg { width: 20px; height: 20px; }
.bell { position: relative; }
.dot { position: absolute; top: 2px; right: 2px; width: 10px; height: 10px; border-radius: 50%; background: #ff8b52; }
.account .help { flex-basis: 19px; height: 19px; margin: 0 7px; border-radius: 50%; background: #a5a9b4; color: #222831; font-weight: 700; font-size: 16px; }
.account .avatar svg { width: 28px; height: 28px; border-radius: 50%; }

.ribbon { flex: none; height: 101px; display: flex; background: #3c4452; border-bottom: 1px solid #2d3541; }
.workspace { flex: 0 0 158px; padding: 12px 13px 15px 14px; display: flex; }
.design { flex: 1; gap: 8px; padding-bottom: 3px; border: 1px solid #6b7b94; border-radius: 5px; font-weight: 700; font-size: 14px; }
.ribbonbody { flex: 1; display: flex; flex-direction: column; }
.ribtabs { display: flex; gap: 24px; padding-left: 8px; height: 26px; }
.ribtab { padding: 0 20px 0 13px; border-bottom: 3px solid transparent; font-size: 14px; }
.ribtab.on { font-weight: 700; border-color: #f3f3f5; }
.groups { display: flex; padding-top: 1px; }
.group { position: relative; padding: 0 7px; display: flex; flex-direction: column; align-items: center; border-left: 1px solid transparent; }
.group + .group::before { content: ""; position: absolute; left: -1px; top: 4px; width: 1px; height: 60px; background: #576070; }
.group.first { padding-left: 0; border-left: 0; }
.group.roomy { padding: 0 16px; }
.tools { display: flex; height: 47px; align-items: center; }
.tool { width: 51px; height: 47px; }
.tool svg { width: 40px; height: 40px; }
.tool.selected { width: 47px; background: #3a5068; border: 1px solid #35718d; }
.tool.selected svg { width: 45px; height: 45px; }
.grouplabel { gap: 4px; height: 20px; margin-right: 6px; font-size: 14px; }
.roomy .grouplabel { margin-right: 0; }
.grouplabel .caret { width: 8px; border-width: 5px 4px 0; }

.viewport { position: relative; flex: 1; min-height: 0; display: grid; grid-template-columns: 358px 1fr; grid-template-rows: 1fr auto; padding: 5px 5px 5px; }
.model { position: absolute; inset: 0; width: 100%; height: 100%; }
.viewcube { position: absolute; top: 20px; right: 12px; width: 110px; height: 110px; font: 500 14px/14px "Noto Sans", sans-serif; }
.faces { font-size: 9px; fill: #4f5257; }
.browser, .comments, .navbar { position: relative; }
.panelhead { height: 30px; display: flex; align-items: center; padding: 0 14px 0 8px; background: #3c4452; border: 1px solid #4b5565; }
.panelhead h2 { flex: 1; font-size: 14px; line-height: 20px; font-weight: 400; }
.panelbtn svg { width: 10px; height: 10px; stroke: #abb0ba; stroke-width: 2; }
.collapse { width: 25px; justify-content: flex-start; }
.collapse svg { width: 9px; height: 8px; fill: #77849a; }
.tree { min-height: 282px; margin-top: 5px; display: flex; flex-direction: column; justify-content: space-between; font-size: 14px; font-weight: 500; }
.tree li { display: flex; height: 24px; align-items: center; padding-left: 38px; }
.tree .root { padding-left: 16px; }
.twist { width: 27px; justify-content: flex-start; padding-left: 6px; height: 24px; }
.twist svg { width: 8px; height: 12px; }
.twist.open { padding-left: 6px; }
.twist.open svg { transform: rotate(90deg); }
.chip { height: 24px; display: flex; align-items: center; gap: 10px; padding: 0 14px 0 2px; background: #3c4452; }
.name { margin-left: 7px; }
.root .chip { padding: 0 10px 0 3px; gap: 0; }
.ico { flex: none; width: 20px; height: 18px; }
.root .eye { margin-right: 7px; }
.rootname { height: 24px; display: flex; align-items: center; gap: 17px; padding: 0 13px 0 2px; background: #1f2530; }
.rootname b { font-weight: 600; }
.badge { position: relative; width: 19px; height: 19px; margin: 0 13px 0 4px; border-radius: 50%; background: #5d8492; text-align: center; font-weight: 600; font-size: 14px; line-height: 19px; }
.badge::after { content: ""; position: absolute; right: 0; bottom: 1px; width: 5px; height: 5px; border-radius: 50%; background: #fff; }
.ring { width: 15px; height: 15px; border: 4px solid #fff; border-radius: 50%; }
.comments { grid-row: 2; grid-column: 1; padding-left: 33px; }
.navbar { grid-row: 2; grid-column: 2; justify-self: start; align-self: start; margin-left: 355px; height: 28px; display: flex; align-items: center; gap: 10px; padding: 0 3px; background: #3c4452; }
.navbar svg { width: 20px; height: 20px; }
.navbar button { gap: 6px; }
.navbar .snug { gap: 2px; }
.navbar .caret { border-width: 5px 3px 0; width: 6px; }

.timeline { flex: none; height: 60px; display: flex; align-items: center; background: #3c4452; border-top: 1px solid #414957; padding: 0 14px 0 13px; }
.playback { flex: 0 0 157px; display: flex; gap: 14px; padding-top: 4px; }
.playback svg { width: 16px; height: 18px; fill: #a9adb7; }
.track { position: relative; align-self: stretch; width: 458px; }
.features { height: 51px; display: grid; grid-template-columns: repeat(16, 1fr); }
.features li { position: relative; display: flex; justify-content: center; align-items: flex-end; padding-bottom: 11px; }
.features li::before { content: ""; position: absolute; bottom: 0; left: 50%; right: -50%; height: 8px; border-left: 2px solid #586579; border-bottom: 2px solid #586579; }
.features li:last-child::before { right: auto; width: 2px; }
.features svg { width: 20px; height: 20px; }
.marker { position: absolute; right: -8px; top: 13px; width: 14px; height: 40px; fill: #d5d7da; }
.settings { margin-left: auto; padding-top: 4px; }
```
